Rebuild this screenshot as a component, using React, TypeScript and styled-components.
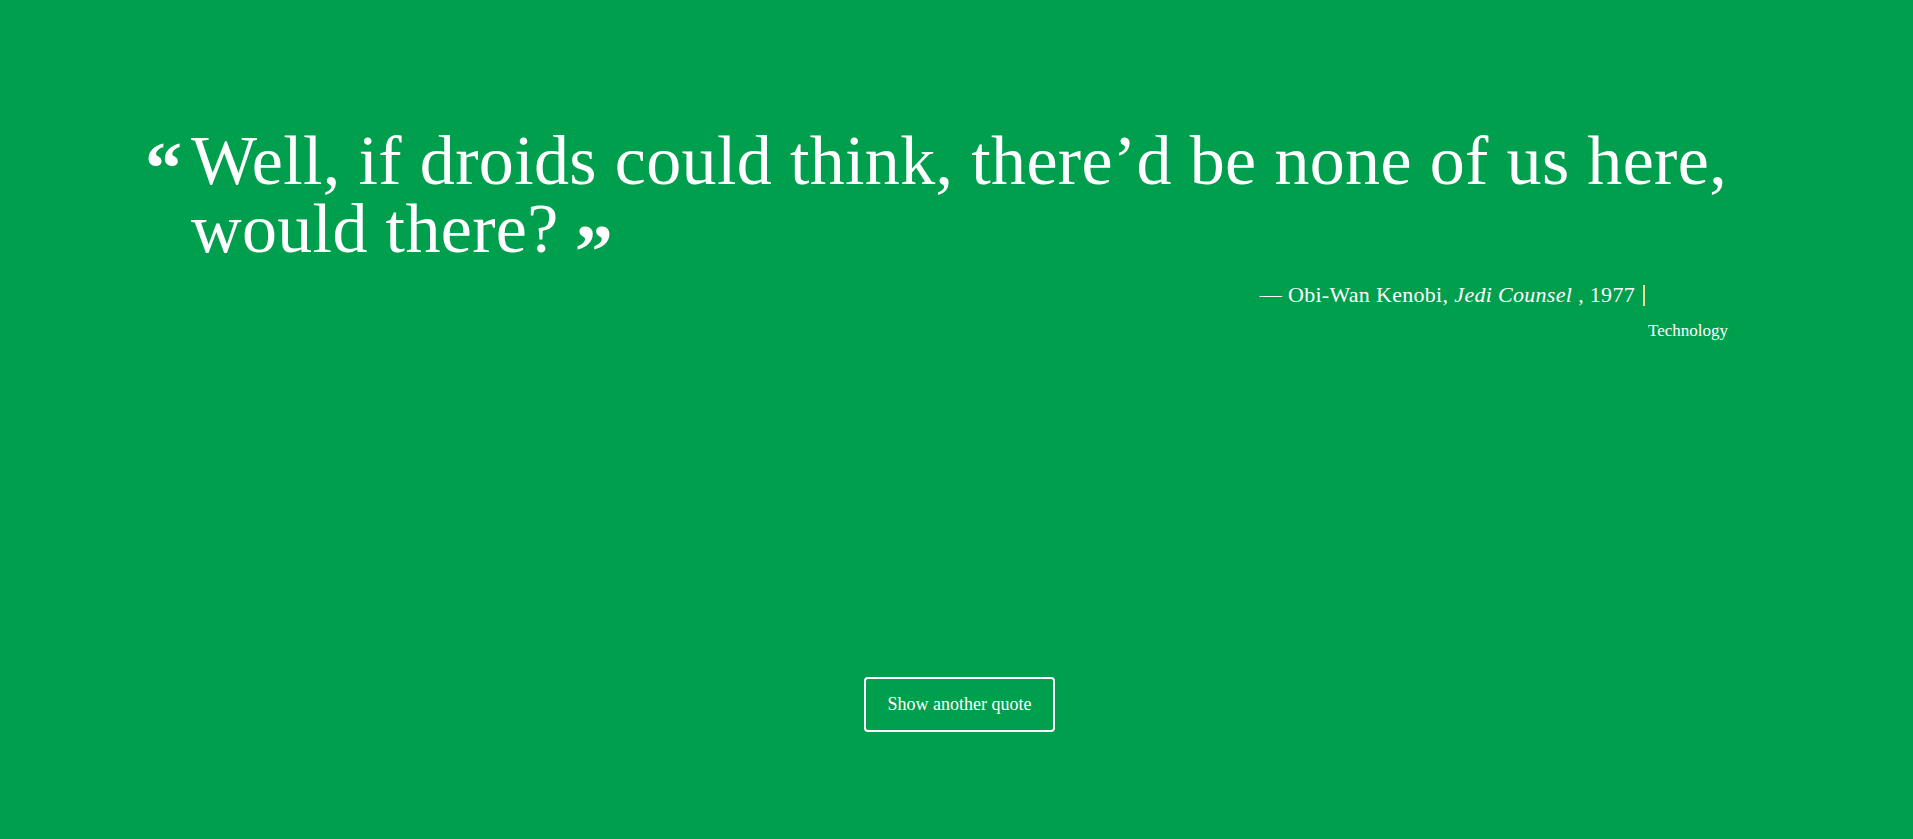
import React from "react";
import styled, { createGlobalStyle } from "styled-components";

const GlobalStyle = createGlobalStyle`
  html, body {
    margin: 0;
    padding: 0;
    background: #009f4d;
  }
  body {
    font-family: "Liberation Serif", "Times New Roman", serif;
    color: #ffffff;
  }
`;

const Page = styled.main`
  min-height: 100vh;
  box-sizing: border-box;
  display: flex;
  flex-direction: column;
  padding: 127px 185px 107px 145px;
`;

const QuoteBlock = styled.figure`
  margin: 0;
  display: flex;
  flex-direction: column;
`;

const QuoteRow = styled.blockquote`
  margin: 0;
  display: flex;
  align-items: flex-start;
`;

const OpenMark = styled.span`
  flex: 0 0 46px;
  font-size: 74px;
  font-weight: 700;
  line-height: 1;
  margin-top: 4px;
`;

const QuoteText = styled.p`
  margin: 0;
  font-size: 70px;
  line-height: 68px;
  font-weight: 400;
  letter-spacing: 0.35px;
`;

const CloseMark = styled.span`
  display: inline-block;
  font-size: 76px;
  font-weight: 700;
  line-height: 0;
  vertical-align: -25px;
  margin-left: 16px;
`;

const Attribution = styled.figcaption`
  display: flex;
  flex-direction: column;
  align-items: flex-end;
  margin-top: 20px;
`;

const Cite = styled.div`
  font-size: 22px;
  line-height: 24px;
  letter-spacing: 0.3px;
  margin-right: 83px;
  display: flex;
  align-items: center;
`;

const Source = styled.em`
  font-style: italic;
  margin-left: 6px;
  margin-right: 6px;
`;

const Caret = styled.span`
  display: inline-block;
  width: 2px;
  height: 21px;
  background: #eee49a;
  margin-left: 8px;
`;

const Category = styled.div`
  font-size: 17px;
  line-height: 20px;
  margin-top: 14px;
`;

const Actions = styled.div`
  margin-top: auto;
  display: flex;
  justify-content: center;
  padding-left: 46px;
`;

const Button = styled.button`
  width: 191px;
  height: 55px;
  box-sizing: border-box;
  background: transparent;
  border: 2px solid #ffffff;
  border-radius: 4px;
  color: #ffffff;
  font-family: "Liberation Serif", "Times New Roman", serif;
  font-size: 18px;
  cursor: pointer;
`;

export default function App() {
  return (
    <>
      <GlobalStyle />
      <Page>
        <QuoteBlock>
          <QuoteRow>
            <OpenMark>“</OpenMark>
            <QuoteText>
              Well, if droids could think, there’d be none of us here, would there?
              <CloseMark>”</CloseMark>
            </QuoteText>
          </QuoteRow>
          <Attribution>
            <Cite>
              — Obi-Wan Kenobi,<Source>Jedi Counsel</Source>, 1977
              <Caret />
            </Cite>
            <Category>Technology</Category>
          </Attribution>
        </QuoteBlock>
        <Actions>
          <Button>Show another quote</Button>
        </Actions>
      </Page>
    </>
  );
}
